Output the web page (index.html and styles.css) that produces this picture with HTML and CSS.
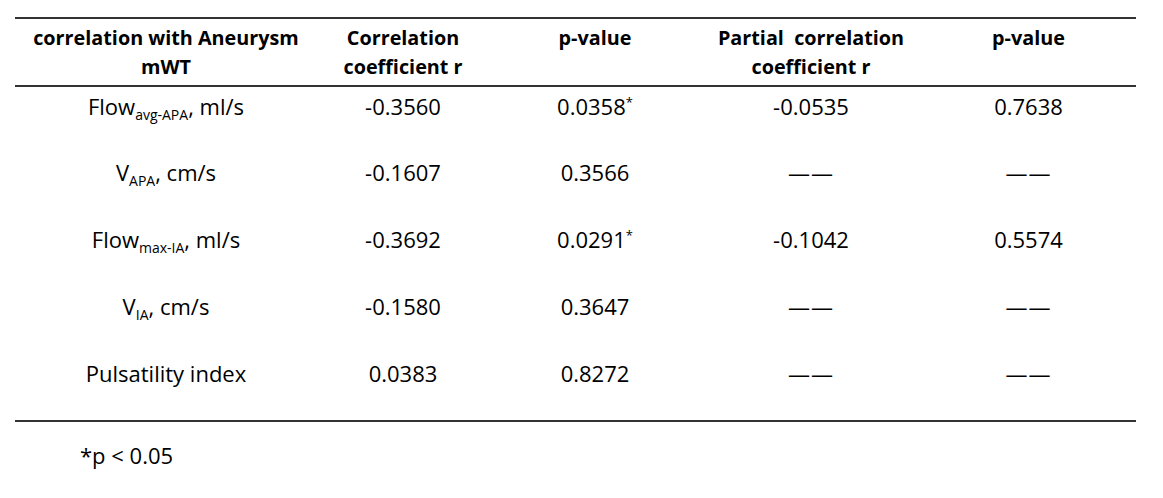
FILE: index.html
```html
<!DOCTYPE html>
<html>
<head>
<meta charset="utf-8">
<link rel="stylesheet" href="styles.css">
</head>
<body>
<div class="page">
  <table class="stats">
    <colgroup>
      <col class="c1"><col class="c2"><col class="c3"><col class="c4"><col class="c5">
    </colgroup>
    <thead>
      <tr>
        <th>correlation with Aneurysm<br>mWT</th>
        <th>Correlation<br>coefficient r</th>
        <th>p-value</th>
        <th>Partial&nbsp; correlation<br>coefficient r</th>
        <th>p-value</th>
      </tr>
    </thead>
    <tbody>
      <tr>
        <td>Flow<sub>avg-APA</sub>, ml/s</td>
        <td>-0.3560</td>
        <td>0.0358<sup>*</sup></td>
        <td>-0.0535</td>
        <td>0.7638</td>
      </tr>
      <tr>
        <td>V<sub>APA</sub>, cm/s</td>
        <td>-0.1607</td>
        <td>0.3566</td>
        <td><span class="dash">——</span></td>
        <td><span class="dash">——</span></td>
      </tr>
      <tr>
        <td>Flow<sub>max-IA</sub>, ml/s</td>
        <td>-0.3692</td>
        <td>0.0291<sup>*</sup></td>
        <td>-0.1042</td>
        <td>0.5574</td>
      </tr>
      <tr>
        <td>V<sub>IA</sub>, cm/s</td>
        <td>-0.1580</td>
        <td>0.3647</td>
        <td><span class="dash">——</span></td>
        <td><span class="dash">——</span></td>
      </tr>
      <tr>
        <td>Pulsatility index</td>
        <td>0.0383</td>
        <td>0.8272</td>
        <td><span class="dash">——</span></td>
        <td><span class="dash">——</span></td>
      </tr>
    </tbody>
  </table>
  <p class="note">*p &lt; 0.05</p>
</div>
</body>
</html>
```

FILE: styles.css
```css
html, body {
  margin: 0;
  padding: 0;
  background: #ffffff;
}

body {
  font-family: "Open Sans", "Liberation Sans", sans-serif;
  font-size: 22px;
  color: #000000;
}

.page {
  padding: 17px 0 0 15px;
}

.stats {
  width: 1121px;
  border-collapse: collapse;
  table-layout: fixed;
  border-top: 2px solid #333333;
  border-bottom: 2px solid #333333;
}

.c1 { width: 302px; }
.c2 { width: 172px; }
.c3 { width: 212px; }
.c4 { width: 220px; }
.c5 { width: 215px; }

.stats th {
  font-size: 19.8px;
  font-weight: 700;
  line-height: 29px;
  text-align: center;
  vertical-align: top;
  padding: 4px 0 4px 0;
  border-bottom: 2px solid #333333;
}

.stats td {
  line-height: 29px;
  height: 67px;
  box-sizing: border-box;
  text-align: center;
  vertical-align: top;
  padding: 5px 0 0 0;
}

.stats sub {
  font-size: 14px;
  line-height: 0;
  vertical-align: -5px;
}

.stats sup {
  font-size: 13px;
  line-height: 0;
  vertical-align: 8px;
}

.dash {
  letter-spacing: 1px;
}

.note {
  margin: 19px 0 0 65px;
  line-height: 29px;
}
```
